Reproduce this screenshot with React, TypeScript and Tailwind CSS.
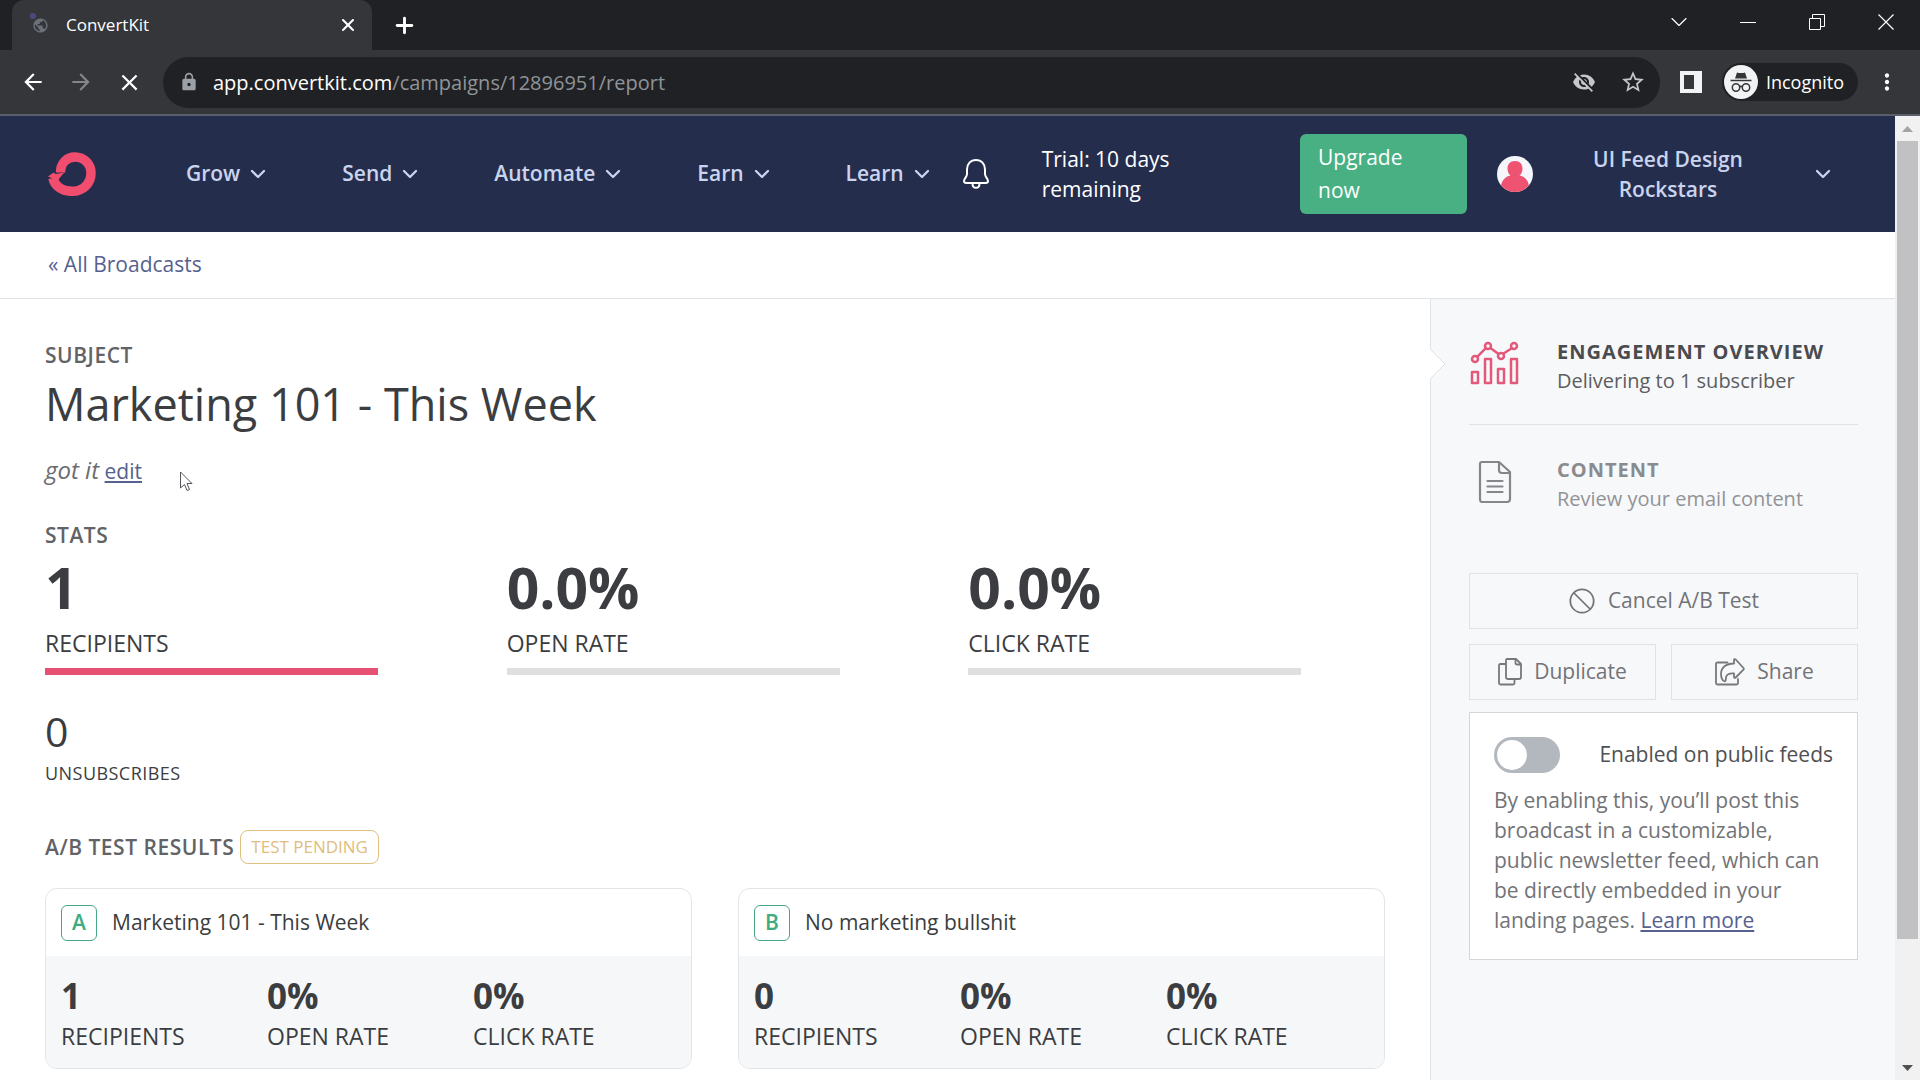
import React from 'react'
import { Ban, ChevronDown, Plus, X } from 'lucide-react'
import { MdArrowBack, MdArrowForward, MdClose, MdLock, MdMoreVert, MdPublic, MdStarBorder, MdVisibilityOff } from 'react-icons/md'

type Stat = { value: string; label: string }

const navItems = ['Grow', 'Send', 'Automate', 'Earn', 'Learn']

const stats: Stat[] = [
  { value: '1', label: 'RECIPIENTS' },
  { value: '0.0%', label: 'OPEN RATE' },
  { value: '0.0%', label: 'CLICK RATE' },
]

const variants: { letter: string; subject: string; stats: Stat[] }[] = [
  {
    letter: 'A',
    subject: 'Marketing 101 - This Week',
    stats: [
      { value: '1', label: 'RECIPIENTS' },
      { value: '0%', label: 'OPEN RATE' },
      { value: '0%', label: 'CLICK RATE' },
    ],
  },
  {
    letter: 'B',
    subject: 'No marketing bullshit',
    stats: [
      { value: '0', label: 'RECIPIENTS' },
      { value: '0%', label: 'OPEN RATE' },
      { value: '0%', label: 'CLICK RATE' },
    ],
  },
]

/* ---------- Icons ---------- */
function LogoIcon() {
  return (
    <svg width="48" height="44" viewBox="0 0 48 44" fill="none">
      <path
        d="M12.500 20.500C12.500 11.500 18.500 5 27 5C36 5 43 12 43 21C43 31.500 35 39.300 24 39.300C14 39.300 6.500 34 5 26"
        stroke="#f04d6f"
        strokeWidth="9.500"
      />
      <path d="M0 24.500L5.500 20.500L7.500 22L16.500 20.500C15 22 11 26 10 29Z" fill="#f04d6f" />
    </svg>
  )
}

function BellIcon() {
  return (
    <svg width="28" height="32" viewBox="0 0 28 32" fill="none" stroke="white" strokeWidth="2">
      <path d="M14 2C8.500 2 5 6 5 11.500V16C5 19 2 20.500 2 23C2 24.300 3 25 4.500 25H23.500C25 25 26 24.300 26 23C26 20.500 23 19 23 16V11.500C23 6 19.500 2 14 2Z" />
      <path d="M10.500 25.500C10.500 31.300 17.500 31.300 17.500 25.500" />
    </svg>
  )
}

function AvatarIcon() {
  return (
    <svg width="36" height="36" viewBox="0 0 36 36">
      <defs>
        <clipPath id="avatar">
          <circle cx="18" cy="18" r="18" />
        </clipPath>
      </defs>
      <g clipPath="url(#avatar)">
        <rect width="36" height="36" fill="#f5f6fc" />
        <path
          d="M18 5C13 5 10.500 8.500 10.500 12.500C10.500 16 12 18.500 13.500 19.500C8 20.500 4.500 25 4 30V36H32V30C31.500 25 28 20.500 22.500 19.500C24 18.500 25.500 16 25.500 12.500C25.500 8.500 23 5 18 5Z"
          fill="#ee5471"
        />
      </g>
    </svg>
  )
}

function ChartIcon() {
  return (
    <svg width="50" height="44" viewBox="0 0 50 44" fill="none" stroke="#e2597a" strokeWidth="2.500" strokeLinejoin="round">
      <rect x="2" y="31" width="6" height="11" />
      <rect x="15" y="18" width="6" height="24" />
      <rect x="28" y="28" width="6" height="14" />
      <rect x="41" y="18" width="6" height="24" />
      <circle cx="5" cy="18" r="3" />
      <circle cx="18" cy="5" r="3" />
      <circle cx="31" cy="15" r="3" />
      <circle cx="44" cy="5" r="3" />
      <path d="M7.200 15.800L15.800 7.200M20.500 7L28.500 13M33.200 12.800L41.800 7.200" />
    </svg>
  )
}

function DocumentIcon() {
  return (
    <svg width="34" height="44" viewBox="0 0 34 44" fill="none" stroke="#858689" strokeWidth="2.200" strokeLinejoin="round">
      <path d="M4 2H21L32 12V39C32 41 31 42 29 42H4C3 42 2 41 2 39V4C2 3 3 2 4 2Z" />
      <path d="M21 2V10C21 12 22 13 24 13H32" />
      <path d="M9.500 21H24.500M9.500 26.500H24.500M9.500 32H24.500" strokeLinecap="round" />
    </svg>
  )
}

function DuplicateIcon() {
  return (
    <svg width="24" height="28" viewBox="0 0 24 28" fill="none" stroke="#77787c" strokeWidth="1.800" strokeLinejoin="round">
      <path d="M9 1H18L23 6V19C23 20.500 22.500 21 21 21H9.500C8.500 21 8 20.500 8 19V2.500C8 1.500 8.200 1 9 1Z" />
      <path d="M17.500 1V5C17.500 6 18 6.500 19 6.500H23" />
      <path d="M8 6H2.500C1.500 6 1 6.500 1 7.500V25C1 26 1.500 26.500 2.500 26.500H15C16 26.500 16.500 26 16.500 25V21" />
    </svg>
  )
}

function ShareIcon() {
  return (
    <svg width="30" height="28" viewBox="0 0 30 28" fill="none" stroke="#77787c" strokeWidth="1.800" strokeLinejoin="round">
      <path d="M12.500 4.500H2.500C1.500 4.500 1 5 1 6V25C1 26 1.500 26.500 2.500 26.500H21.500C22.500 26.500 23 26 23 25V21" strokeLinecap="round" />
      <path d="M19 5.500V2C19 1 20 .800 20.700 1.500L28.500 10C29 10.600 29 11 28.500 11.600L20.700 19.500C20 20.200 19 20 19 19V15.500C14 15.200 11.500 16.500 11 19.500C10.700 21.500 11 23.300 9.500 23.300C7.500 23.300 6 19.500 6 16C6 9.500 11 5.500 19 5.500Z" />
    </svg>
  )
}

function IncognitoIcon() {
  return (
    <svg width="34" height="34" viewBox="0 0 34 34" fill="none">
      <circle cx="17" cy="17" r="17" fill="#f1f3f4" />
      <path d="M13 7.500C15 8.200 19 8.200 21 7.500L23 13.500H11Z" fill="#35363a" />
      <path d="M6.500 15.500H27.500" stroke="#35363a" strokeWidth="1.500" />
      <circle cx="12" cy="22.500" r="3.700" stroke="#35363a" strokeWidth="1.500" />
      <circle cx="22" cy="22.500" r="3.700" stroke="#35363a" strokeWidth="1.500" />
      <path d="M15.500 22C16.500 21 17.500 21 18.500 22" stroke="#35363a" strokeWidth="1.500" />
    </svg>
  )
}

/* ---------- Browser chrome ---------- */
function TabStrip() {
  return (
    <div className="flex h-[50px] shrink-0 bg-[#202124] pl-3 text-white">
      <div className="flex w-[360px] items-center rounded-t-xl bg-[#35363a] pl-5 pr-2.5">
        <span className="relative">
          <MdPublic size={17} className="text-[#6b7079]" />
          {/* loading spinner */}
          <span className="absolute -left-0.5 -top-1 size-1.5 rounded-full bg-[#4b4a80]" />
        </span>
        <span className="ml-[17px] flex-1 text-[17px]">ConvertKit</span>
        <button aria-label="Close tab" className="p-1">
          <X size={20} strokeWidth={2.5} />
        </button>
      </div>
      <button aria-label="New tab" className="px-5">
        <Plus size={25} strokeWidth={2.8} />
      </button>
      <div className="ml-auto flex h-11 items-center">
        <button aria-label="Search tabs" className="grid w-[69px] place-items-center">
          <ChevronDown size={28} strokeWidth={1} />
        </button>
        <button aria-label="Minimize" className="grid w-[69px] place-items-center">
          <svg width="16" height="16" stroke="white">
            <path d="M0 8.500H16" />
          </svg>
        </button>
        <button aria-label="Restore" className="grid w-[69px] place-items-center">
          <svg width="16" height="16" fill="none" stroke="white">
            <path d="M.500 4.500H11.500V15.500H.500ZM3.500 4.500V.500H15.500V12.500H11.500" />
          </svg>
        </button>
        <button aria-label="Close" className="grid w-[69px] place-items-center">
          <svg width="16" height="16" fill="none" stroke="white" strokeWidth="1.200">
            <path d="M.500 .500L15.500 15.500M15.500 .500L.500 15.500" />
          </svg>
        </button>
      </div>
    </div>
  )
}

function Toolbar() {
  return (
    <div className="flex h-[66px] shrink-0 items-center border-b-2 border-[#5a5e68] bg-[#35363a] pl-5 pr-5 text-white">
      <button aria-label="Back" className="w-12">
        <MdArrowBack size={26} />
      </button>
      <button aria-label="Forward" className="w-12 text-[#85868a]">
        <MdArrowForward size={26} />
      </button>
      <button aria-label="Stop" className="w-[47px]">
        <MdClose size={27} />
      </button>
      <div className="flex h-[51px] flex-1 items-center rounded-full bg-[#202124] pl-4 pr-3 text-[#c4c7ca]">
        <MdLock size={20} className="text-[#9aa0a6]" />
        <span className="ml-3.5 flex-1 pt-0.5 text-xl text-[#8f9499]">
          <span className="text-white">app.convertkit.com</span>/campaigns/12896951/report
        </span>
        <button aria-label="Third-party cookies blocked" className="w-12">
          <MdVisibilityOff size={24} />
        </button>
        <button aria-label="Bookmark" className="w-7">
          <MdStarBorder size={26} />
        </button>
      </div>
      <button aria-label="Side panel" className="mx-5">
        <svg width="22" height="22" viewBox="0 0 22 22">
          <path d="M0 0H22V22H0ZM4 4V18H14V4Z" fill="#f1f3f4" fillRule="evenodd" />
        </svg>
      </button>
      <div className="flex h-[38px] items-center gap-2 rounded-full bg-[#202124] pl-0.5 pr-3.5">
        <IncognitoIcon />
        <span className="text-lg">Incognito</span>
      </div>
      <button aria-label="Menu" className="ml-4">
        <MdMoreVert size={26} />
      </button>
    </div>
  )
}

function Scrollbar() {
  return (
    <div className="flex w-[25px] shrink-0 flex-col items-center bg-[#f1f1f2]">
      <svg width="25" height="25">
        <path d="M7 16L12.500 10L18 16Z" fill="#a3a3a3" />
      </svg>
      <div className="w-[21px] flex-[798] bg-[#c1c1c3]" />
      <div className="flex-[116]" />
      <svg width="25" height="25">
        <path d="M7 10L12.500 16L18 10Z" fill="#505050" />
      </svg>
    </div>
  )
}

/* ---------- App ---------- */
function Header() {
  return (
    <header className="flex h-[116px] shrink-0 items-center bg-[#252d4d] pl-12 text-[#c9d4ee]">
      <LogoIcon />
      <nav className="ml-[90px] flex gap-[72px] font-semibold">
        {navItems.map((item) => (
          <button key={item} className="flex items-center gap-1.5">
            {item}
            <ChevronDown size={24} strokeWidth={2.3} />
          </button>
        ))}
      </nav>
      <button aria-label="Notifications" className="ml-7">
        <BellIcon />
      </button>
      <div className="ml-[52px] w-[150px] leading-[30px] text-white">Trial: 10 days remaining</div>
      <a href="#" className="ml-auto w-[167px] rounded-md bg-[#48b083] px-[18px] py-[7px] leading-[33px] text-white">
        Upgrade
        <br />
        now
      </a>
      <button className="ml-[30px] flex items-center pr-[60px] font-semibold">
        <AvatarIcon />
        <span className="mx-[35px] w-[200px] leading-[30px]">UI Feed Design Rockstars</span>
        <ChevronDown size={24} strokeWidth={2.3} className="ml-2" />
      </button>
    </header>
  )
}

function StatValue({ stat, active }: { stat: Stat; active: boolean }) {
  return (
    <div className="w-[333px]">
      <div className="text-[57px] font-bold leading-[64px]">{stat.value}</div>
      <div className="mt-2 text-[23px] leading-8">{stat.label}</div>
      <div className={active ? 'mt-[9px] h-[7px] bg-[#e65073]' : 'mt-[9px] h-[7px] bg-[#dfdfdf]'} />
    </div>
  )
}

function VariantCard({ letter, subject, stats }: { letter: string; subject: string; stats: Stat[] }) {
  return (
    <section className="overflow-hidden rounded-xl border border-[#e2e4ea]">
      <div className="flex h-[67px] items-center gap-[15px] px-[15px]">
        <span className="flex h-9 w-9 justify-center rounded-md border border-[#48a883] font-semibold leading-8 text-[#41ab80]">
          {letter}
        </span>
        <h3>{subject}</h3>
      </div>
      <div className="grid grid-cols-3 bg-[#f6f7f9] pb-4 pl-[15px] pr-3 pt-5">
        {stats.map((s) => (
          <div key={s.label}>
            <div className="text-[35px] font-bold leading-10">{s.value}</div>
            <div className="mt-1 text-[23px] leading-8">{s.label}</div>
          </div>
        ))}
      </div>
    </section>
  )
}

const sectionLabel = 'font-semibold leading-[30px] tracking-wide text-[#626366]'
const inlineLink = 'text-[#56618f] underline decoration-2 underline-offset-2'

function Report() {
  return (
    <main className="flex-1 px-[45px] pt-[41px]">
      <h4 className={sectionLabel}>SUBJECT</h4>
      <h1 className="mt-1 text-[45px] leading-[60px]">Marketing 101 - This Week</h1>
      <p className="mt-5 leading-[30px] text-[#6c6d70]">
        <em className="text-2xl">got it</em>{' '}
        <a href="#" className={inlineLink}>
          edit
        </a>
      </p>

      <h4 className={sectionLabel + ' mt-[34px]'}>STATS</h4>
      <div className="-mr-[45px] mt-[5px] grid grid-cols-3">
        {stats.map((s, i) => (
          <StatValue key={s.label} stat={s} active={i === 0} />
        ))}
      </div>
      <div className="mt-[31px] text-[41px] leading-[50px]">0</div>
      <div className="mt-1 text-lg leading-[26px] tracking-wide">UNSUBSCRIBES</div>

      <div className="mt-11 flex items-center gap-1.5">
        <h4 className={sectionLabel}>A/B TEST RESULTS</h4>
        <span className="rounded-lg border border-[#dfc07f] px-2.5 text-[17px] leading-8 text-[#dfbd7d]">
          TEST PENDING
        </span>
      </div>
      <div className="mt-6 grid grid-cols-2 gap-[46px]">
        {variants.map((v) => (
          <VariantCard key={v.letter} {...v} />
        ))}
      </div>
    </main>
  )
}

const sideButton = 'flex h-14 items-center justify-center gap-3 border border-[#e1e2e6] text-[#727377]'

function Sidebar() {
  return (
    <aside className="w-[465px] shrink-0 border-l border-[#e1e2e6] bg-[#f7f8fa] pl-[38px] pr-[37px] pt-9">
      <a href="#" className="relative flex h-[90px] border-b border-[#e1e2e6]">
        {/* notch pointing from the report to the active section */}
        <svg width="16" height="30" className="absolute -left-[39px] top-[14px]">
          <path d="M0 0L15 15L0 30Z" fill="white" />
          <path d="M.500 .500L15 15L.500 29.500" fill="none" stroke="#e1e2e6" />
        </svg>
        <span className="w-[88px] pl-px pt-1.5">
          <ChartIcon />
        </span>
        <span className="pt-0.5">
          <b className="block text-xl leading-[30px] tracking-wider text-[#4a4b4e]">ENGAGEMENT OVERVIEW</b>
          <span className="block text-xl leading-7 text-[#5c5d60]">Delivering to 1 subscriber</span>
        </span>
      </a>
      <a href="#" className="mt-7 flex h-[120px]">
        <span className="w-[88px] pl-[9px] pt-[7px]">
          <DocumentIcon />
        </span>
        <span className="pt-0.5">
          <b className="block text-xl leading-[30px] tracking-wider text-[#8a8b8e]">CONTENT</b>
          <span className="block text-xl leading-7 text-[#929396]">Review your email content</span>
        </span>
      </a>
      <div className="grid grid-cols-2 gap-[15px]">
        <button className={sideButton + ' col-span-2'}>
          <Ban size={28} strokeWidth={1.5} />
          Cancel A/B Test
        </button>
        <button className={sideButton}>
          <DuplicateIcon />
          Duplicate
        </button>
        <button className={sideButton}>
          <ShareIcon />
          Share
        </button>
      </div>
      <section className="mt-3 border border-[#d5d6da] bg-white px-6 py-6">
        <label className="flex items-center justify-between">
          <input
            type="checkbox"
            role="switch"
            className="h-9 w-[66px] appearance-none rounded-full bg-[#b3b7be] p-[3px] before:block before:size-[30px] before:rounded-full before:bg-white"
          />
          <span className="text-[#4f5053]">Enabled on public feeds</span>
        </label>
        <p className="mt-3 leading-[30px] text-[#727377]">
          By enabling this, you’ll post this broadcast in a customizable, public newsletter feed, which can be directly
          embedded in your landing pages.{' '}
          <a href="#" className={inlineLink}>
            Learn more
          </a>
        </p>
      </section>
    </aside>
  )
}

function MouseCursor() {
  return (
    <svg width="14" height="21" className="absolute left-[180px] top-[471px]" fill="white" stroke="#55565a">
      <path d="M.500 1V17L4.500 13.500L7 19.500L9.500 18.500L7 12.500H12Z" />
    </svg>
  )
}

export default function App() {
  return (
    <div className="relative flex h-screen flex-col overflow-hidden bg-white font-['Open_Sans',sans-serif] text-[21px] text-[#3b3d40]">
      <TabStrip />
      <Toolbar />
      <div className="flex min-h-0 flex-1">
        <div className="flex min-w-0 flex-1 flex-col overflow-hidden">
          <Header />
          <div className="flex h-[67px] shrink-0 items-center border-b border-[#e1e2e6] px-12 text-[#56618f]">
            <a href="#">« All Broadcasts</a>
          </div>
          <div className="flex flex-1">
            <Report />
            <Sidebar />
          </div>
        </div>
        <Scrollbar />
      </div>
      <MouseCursor />
    </div>
  )
}
